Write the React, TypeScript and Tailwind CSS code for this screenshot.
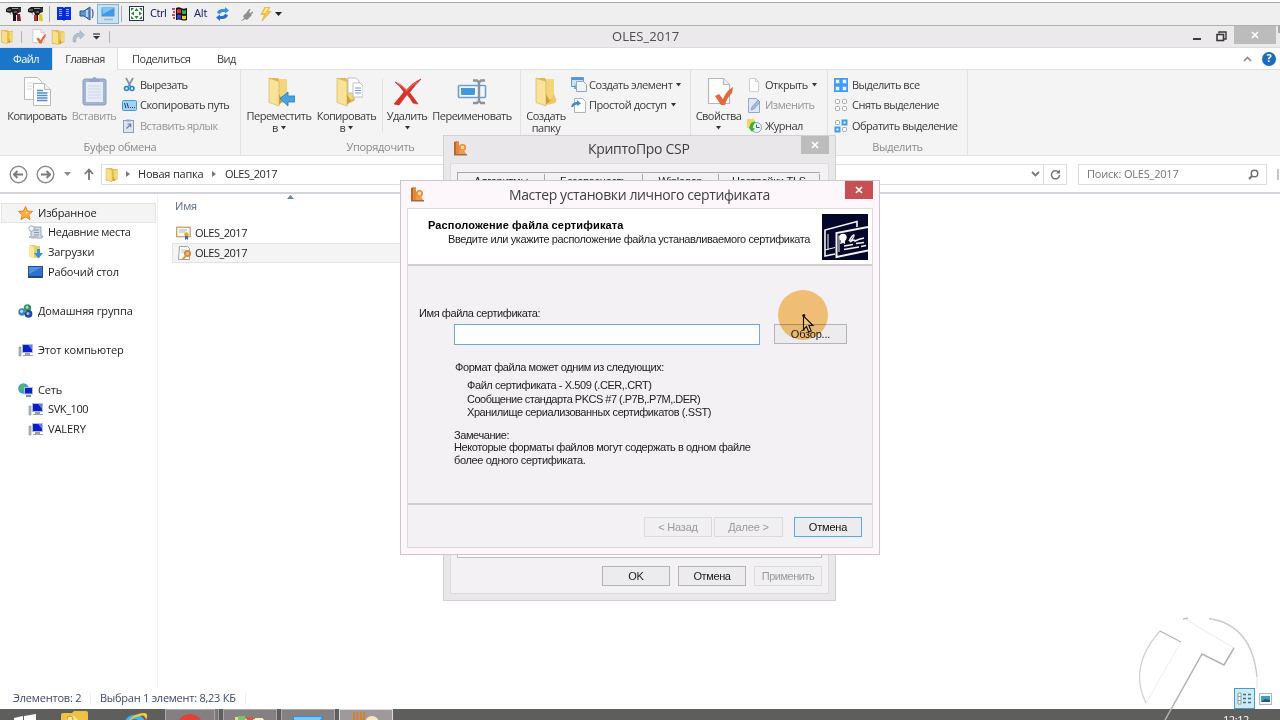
import type { ReactNode } from "react";

type SvgProps = { w: number; h: number; vb?: string; className?: string; children: ReactNode };

function Svg({ w, h, vb, className = "", children }: SvgProps) {
  return (
    <svg width={w} height={h} viewBox={vb ?? `0 0 ${w} ${h}`} fill="none" className={`block shrink-0 ${className}`}>
      {children}
    </svg>
  );
}

/* ---------- icons ---------- */

function Hammer({ yellow = false }: { yellow?: boolean }) {
  return (
    <Svg w={16} h={16}>
      <path d="M0 3l3-2h12v5l-3 1-1 2H7L6 6 4 7 0 6z" fill="#1c1c1c" />
      <path d="M1 4h4M6 2.500h7M8 6h3" stroke="#9a9a9a" />
      <path d="M12 2h3v4h-2z" fill="#3a3a3a" />
      <path d="M7 7h3v8H7z" fill="#15151f" />
      <path d="M11 8h3l1 7h-4z" fill={yellow ? "#e0c820" : "#7d1c30"} />
      {yellow && <path d="M6 9h3v6H6z" fill="#b8322a" />}
      <path d="M4 7l1 2" stroke="#999" />
    </Svg>
  );
}

function Book() {
  return (
    <Svg w={14} h={15}>
      <path d="M0 1h6l1 1 1-1h6v13H8l-1 1-1-1H0z" fill="#0b2fe8" />
      <path d="M2 3.500h3M2 5.500h3M2 7.500h3M2 9.500h3M9 3.500h3M9 5.500h3M9 7.500h3M9 9.500h3" stroke="#8fc0ff" />
      <path d="M7 2v12" stroke="#0b1880" />
    </Svg>
  );
}

function Speaker() {
  return (
    <Svg w={16} h={15}>
      <path d="M1 5h4l6-4v13l-6-4H1z" fill="#5f93cc" stroke="#2e5588" />
      <path d="M8 4v7" stroke="#cfe4f8" strokeWidth="1.500" />
      <path d="M13 3q2 4.500 0 9" stroke="#4a6f9c" strokeWidth="1.300" />
    </Svg>
  );
}

function Screen() {
  return (
    <Svg w={16} h={15}>
      <rect x="1.500" y="1.500" width="13" height="9" rx="1" fill="#3f9ae6" stroke="#9fb4c8" />
      <path d="M2 2h12L3 8z" fill="#7cc3f7" />
      <path d="M4 13.500h9" stroke="#a5b4c2" strokeWidth="1.500" />
    </Svg>
  );
}

function Expand() {
  return (
    <Svg w={15} h={15}>
      <rect x=".5" y=".5" width="14" height="14" fill="#fff" stroke="#2b3050" />
      <path d="M7.500 2l2 3h-4zM7.500 13l2-3h-4zM2 7.500l3-2v4zM13 7.500l-3-2v4z" fill="#168a28" />
      <path d="M2 2h3L2 5zM13 2h-3l3 3zM2 13h3l-3-3zM13 13h-3l3-3z" fill="#1f7a30" />
    </Svg>
  );
}

function WinFlag() {
  return (
    <Svg w={16} h={14}>
      <path d="M4 1q3-1.500 5 0t6 0v12q-3 1-5.500 0T4 13z" fill="#111" />
      <path d="M5 2.500q2-1 4 0v4q-2-1-4 0z" fill="#e0322b" />
      <path d="M10 3q2 .8 4 0v3.800q-2 .8-4 0z" fill="#35b038" />
      <path d="M5 8q2-1 4 0v4q-2-1-4 0z" fill="#2848e0" />
      <path d="M10 8.500q2 .8 4 0v3.500q-2 .8-4 0z" fill="#f0d020" />
      <path d="M0 2h3M1 5h2M0 8h3M1 11h2" stroke="#b02030" strokeWidth="1.500" />
    </Svg>
  );
}

function Sync() {
  return (
    <Svg w={13} h={14}>
      <path d="M1 6q1-4 6-4h2V0l4 3.500-4 3V5H7Q5 5 4 7z" fill="#3a8fe0" />
      <path d="M12 8q-1 4-6 4H4v2L0 10.500l4-3V9h2q2 0 3-2z" fill="#2a6fd0" />
    </Svg>
  );
}

function Plug() {
  return (
    <Svg w={12} h={12}>
      <path d="M0 12l3-3-1-2 5-5 4 4-5 5-2-1-3 2z" fill="#8f8f8f" />
      <path d="M7 3l2-3M9 5l3-2" stroke="#8f8f8f" strokeWidth="1.500" />
    </Svg>
  );
}

function Bolt() {
  return (
    <Svg w={12} h={14}>
      <path d="M5 0h5L7.500 4.500H11L2 14l2.500-6.500H1z" fill="#f5c84a" stroke="#dba53c" strokeWidth=".6" />
      <path d="M6 1h2.500L5 6H3z" fill="#ffeb9a" />
    </Svg>
  );
}

function Caret({ color = "#333", className = "" }: { color?: string; className?: string }) {
  return (
    <Svg w={5} h={4} className={className}>
      <path d="M0 0h5L2.500 3.500z" fill={color} />
    </Svg>
  );
}

function Folder({ w = 14, h = 15 }: { w?: number; h?: number }) {
  return (
    <Svg w={w} h={h} vb="0 0 14 15">
      <path d="M1 1h6l1 1h4.500v10.500L9 14H1z" fill="#e5c154" />
      <path d="M1 1l6 2.200V15l-6-2z" fill="#f7df8c" stroke="#d6b049" strokeWidth=".5" />
      <path d="M9 3h3.500v9H9z" fill="#f2d678" />
      <path d="M8 9l2 4-2 1.500z" fill="#cf9f34" />
    </Svg>
  );
}

function BigFolder({ kind }: { kind: "move" | "copy" | "new" }) {
  return (
    <Svg w={32} h={32}>
      <path d="M6 2h9l1 1.500h8V22q0 3-3 4l-6 2-8-2z" fill="#e0b94c" />
      <path d="M16 4h8v18l-8 3z" fill="#f3d67c" />
      <path d="M6 2l10 3.500V30L6 26.500z" fill="#f9e299" stroke="#d4b050" strokeWidth=".6" />
      <path d="M16 18l4 7-4 4z" fill="#d0a036" />
      {kind === "move" && (
        <path d="M17 22.500l8-6.500v4h7v6h-7v4z" fill="#4aa3df" stroke="#2478b8" strokeWidth=".8" />
      )}
      {kind === "copy" && (
        <g fill="#fff" stroke="#aab2bd" strokeWidth=".8">
          <path d="M17 2h8l3 3v12H17z" />
          <path d="M22 7h7l3 3v11H22z" />
          <path d="M24 12h6M24 14.500h6M24 17h6" stroke="#6f9cd6" strokeWidth="1" />
        </g>
      )}
      {kind === "new" && <path d="M24 18q4 7 1 9l-8 2 4-5z" fill="#ecc968" />}
    </Svg>
  );
}

function CopyBig() {
  return (
    <Svg w={32} h={32}>
      <g fill="#fff" stroke="#b6b9be" strokeWidth="1">
        <path d="M3.500 1.500h13l4 4v18h-17z" />
        <path d="M12.500 7.500h11l6 6v16h-17z" />
        <path d="M23.500 7.500v6h6" fill="#edf1f6" />
      </g>
      <path d="M16 14.500h6M16 17h10.500M16 19.500h10.500M16 22h10.500M16 24.500h10.500" stroke="#4f8bd0" strokeWidth="1.400" />
      <path d="M6 7h6M6 10h5M6 13h5" stroke="#d5dbe2" />
    </Svg>
  );
}

function PasteBig() {
  return (
    <Svg w={32} h={32}>
      <rect x="5" y="3" width="23" height="26" rx="2" fill="#a3b3d0" stroke="#8a9dc0" />
      <rect x="8" y="6" width="17" height="20" fill="#e6edf8" />
      <path d="M11 3h3q2.500-4 5 0h3v3H11z" fill="#94a5c8" />
      <path d="M10 10h13M10 13h13M10 16h13M10 19h13M10 22h13" stroke="#cbd6e8" />
    </Svg>
  );
}

function DeleteBig() {
  return (
    <Svg w={32} h={32}>
      <path d="M4 6Q10 8 15.500 14 21 7 30 3q-6 6-11.500 13.500Q23 22 27 28l-5-1q-2-4-6-8.500Q11 25 8 29l-5-1Q9 21 13 16 9 10 4 6z" fill="#d4342c" stroke="#d4342c" strokeWidth=".8" />
      <path d="M6 7q6 3 9.500 8Q21 9 26 6" stroke="#ea7466" strokeWidth="1" />
    </Svg>
  );
}

function RenameBig() {
  return (
    <Svg w={32} h={32}>
      <rect x="2.500" y="9.500" width="27" height="12" rx="1" fill="#f2f6fa" stroke="#6f9fc8" strokeWidth="1.600" />
      <rect x="5.500" y="12.500" width="13" height="6" fill="#3d9ade" stroke="#2d78b8" strokeWidth=".6" />
      <path d="M17 4.500h4l2 2 2-2h4M17 27h4l2-2 2 2h4M23 5v21" stroke="#8b949e" strokeWidth="2.400" />
    </Svg>
  );
}

function CheckSheet({ w, h }: { w: number; h: number }) {
  return (
    <Svg w={w} h={h} vb="0 0 32 32">
      <path d="M5.500 2.500h15l6 6v19h-21z" fill="#fff" stroke="#b5b8bc" strokeWidth="1.200" />
      <path d="M20.500 2.500v6h6" fill="#eee" stroke="#b5b8bc" strokeWidth="1.200" />
      <path d="M12 20l4-2 4 5Q23 15 30 11l-1 6q-5 5-7 12h-4z" fill="#e4683e" />
    </Svg>
  );
}

function Scissors() {
  return (
    <Svg w={15} h={15}>
      <path d="M4 1l5 9M11 1L6 10" stroke="#7a8ea8" strokeWidth="1.600" />
      <circle cx="4.500" cy="11.500" r="2" fill="#d9eefc" stroke="#2488cc" strokeWidth="1.600" />
      <circle cx="10" cy="11.500" r="2" fill="#d9eefc" stroke="#2488cc" strokeWidth="1.600" />
    </Svg>
  );
}

function PathIcon() {
  return (
    <Svg w={15} h={11}>
      <rect x=".5" y=".5" width="14" height="10" rx="1" fill="#9fd0f6" stroke="#4b9ad8" />
      <path d="M2.500 3l1.500 5M5 3l1.500 5" stroke="#20456a" />
      <path d="M8 7.500h1M10 7.500h1M12 7.500h1" stroke="#20456a" strokeWidth="1.200" />
    </Svg>
  );
}

function ShortcutIcon() {
  return (
    <Svg w={14} h={14}>
      <rect x="1.500" y="1.500" width="10" height="12" fill="#dde4f1" stroke="#8d9dbd" />
      <path d="M4 .5h5v2H4z" fill="#9aaac8" />
      <path d="M4.500 9.500l4-4M5.500 5h3.200v3.200" stroke="#6b7fa8" strokeWidth="1.200" />
    </Svg>
  );
}

function NewItemIcon() {
  return (
    <Svg w={16} h={15}>
      <path d="M.5.5h12v9H.5z" fill="#cfe3f5" stroke="#5b9cd0" />
      <path d="M1 1h11v2H1z" fill="#4d98d8" />
      <path d="M5.500 4.500h7l3 3v7h-10z" fill="#eef3f8" stroke="#93a7bb" />
      <path d="M3 12l1-6 1 6z" fill="#5b9cd0" />
    </Svg>
  );
}

function EasyAccessIcon() {
  return (
    <Svg w={15} h={15}>
      <path d="M3.500.5h8l3 3v11h-11z" fill="#fff" stroke="#aab4be" />
      <path d="M0 9q1-5 6-5V2l4 3.500L6 8V6.500Q3 6.500 2 9z" fill="#3f8fd0" />
    </Svg>
  );
}

function BlankSheet() {
  return (
    <Svg w={14} h={14}>
      <path d="M2.500.5h6l3 3v10h-9z" fill="#fff" stroke="#cfcfcf" />
      <path d="M8.500.5v3h3" stroke="#cfcfcf" />
    </Svg>
  );
}

function EditSheet() {
  return (
    <Svg w={14} h={15}>
      <path d="M1.500.5h8l3 3v11h-11z" fill="#dfe8f6" stroke="#8fa8d0" />
      <path d="M4 12l1-3 6-7 2 2-6 7z" fill="#a7bbdf" stroke="#7690c2" strokeWidth=".7" />
    </Svg>
  );
}

function HistoryIcon() {
  return (
    <Svg w={15} h={14}>
      <path d="M0 0h7l1 2v7H0z" fill="#f3d566" />
      <circle cx="9.500" cy="8.500" r="5" fill="#eaf3f8" stroke="#8aa0b4" />
      <path d="M9.500 5.500v3h3" stroke="#3c5a7c" />
      <path d="M2 9l2-5q3-2 5-1-3 2-3 6l2 .500L5 13z" fill="#35b52e" />
    </Svg>
  );
}

function SelectIcon({ kind }: { kind: "all" | "none" | "invert" }) {
  const cells = [
    [1, 1],
    [8, 1],
    [1, 8],
    [8, 8],
  ];
  return (
    <Svg w={14} h={14}>
      {kind === "all" && <rect width="14" height="14" fill="#3f9cf0" />}
      {cells.map(([x, y], i) => {
        const on = kind === "all" || (kind === "invert" && (i === 1 || i === 2));
        return on ? (
          <rect key={i} x={x + 0.5} y={y + 0.5} width="4" height="4" fill="#e8f4ff" stroke="#3f9cf0" strokeWidth={kind === "all" ? 0.5 : 2} />
        ) : (
          <rect key={i} x={x + 0.5} y={y + 0.5} width="4" height="4" rx="1" fill="#fff" stroke="#a4a4a4" />
        );
      })}
    </Svg>
  );
}

function NavCircle({ flip = false }: { flip?: boolean }) {
  return (
    <Svg w={19} h={19} className={flip ? "-scale-x-100" : ""}>
      <circle cx="9.500" cy="9.500" r="8.300" stroke="#8a8a8a" strokeWidth="1.400" />
      <path d="M5 9.500h9M8.500 6L5 9.500 8.500 13" stroke="#7a7a7a" strokeWidth="2" />
    </Svg>
  );
}

function Computer() {
  return (
    <Svg w={16} h={14}>
      <path d="M1 4h2v9H1z" fill="#b4babf" stroke="#858d94" strokeWidth=".6" />
      <rect x="4" y="1" width="11" height="9" fill="#b4bdcb" />
      <rect x="5" y="2" width="9" height="7" fill="#0a1ecb" />
      <path d="M10 2h4v5z" fill="#5c7cf0" />
      <path d="M7 10h5v2H7zM5 12h10v1H5z" fill="#9aa2ac" />
    </Svg>
  );
}

function Star() {
  return (
    <Svg w={15} h={14}>
      <path d="M7.500.5l2 4.500 5 .5-3.800 3.300L12 13.500l-4.500-2.600L3 13.500l1.300-4.700L.5 5.500l5-.5z" fill="#fbb040" stroke="#e8812a" />
      <path d="M7.500 3l1 3h2.500L8 8z" fill="#ffe08a" />
    </Svg>
  );
}

function Recent() {
  return (
    <Svg w={15} h={14}>
      <path d="M3 2h10v9h2q0 2-2 2H3z" fill="#d3dce4" stroke="#8b98a5" strokeWidth=".8" />
      <path d="M6 5h5M6 7.500h5M6 10h5" stroke="#7f98b4" />
      <circle cx="3.500" cy="3.500" r="2.700" fill="#f2f5f7" stroke="#8f9ba6" strokeWidth=".8" />
      <path d="M1 11h9v2H1z" fill="#b5c0ca" />
    </Svg>
  );
}

function Downloads() {
  return (
    <Svg w={15} h={15}>
      <path d="M1 1h6l1 1h4v11l-5 1-6-1.500z" fill="#eccb62" />
      <path d="M1 1l5 2v11.500l-5-1.500z" fill="#fbe7a0" />
      <path d="M9 5h3v4h3l-4.500 5.500L6 9h3z" fill="#2f93d8" />
    </Svg>
  );
}

function Desktop() {
  return (
    <Svg w={15} h={12}>
      <rect x=".5" y=".5" width="14" height="11" fill="#2f6fd0" stroke="#24508f" />
      <path d="M1 1h13L1 8z" fill="#4e92e6" />
      <path d="M1 10.500h13" stroke="#1c3f78" />
    </Svg>
  );
}

function HomeGroup() {
  return (
    <Svg w={15} h={14}>
      <circle cx="9.500" cy="4" r="3.700" fill="#2f8f66" />
      <circle cx="4" cy="8" r="3.700" fill="#3d7fd0" />
      <circle cx="10.500" cy="9.800" r="3.900" fill="#2448a8" />
      <circle cx="9" cy="3.300" r="1.500" fill="#a9dca8" />
      <circle cx="3.600" cy="7.200" r="1.500" fill="#bfe0f8" />
      <circle cx="10" cy="9.500" r="1.500" fill="#9fc4f0" />
      <circle cx="7" cy="7" r="1.500" fill="#35b04a" />
    </Svg>
  );
}

function Network() {
  return (
    <Svg w={15} h={14}>
      <circle cx="5.500" cy="5.500" r="5.300" fill="#3f9fd8" />
      <path d="M2 3q3-3 5 0t-2 4-3-4z" fill="#4cc054" />
      <rect x="6" y="4" width="9" height="7.500" fill="#b4bdcb" />
      <rect x="7" y="5" width="7" height="5.500" fill="#0a1ecb" />
      <path d="M8 12h5v2H8z" fill="#6f8fc0" />
    </Svg>
  );
}

function CertFile() {
  return (
    <Svg w={15} h={14}>
      <rect x=".7" y="1.200" width="13.500" height="9.500" fill="#fbfaf4" stroke="#c29a5c" strokeWidth="1.200" />
      <path d="M3 4h8M3 6h6" stroke="#aab4c0" />
      <circle cx="10.500" cy="8.500" r="2.200" fill="#e5a33a" />
      <path d="M9 10h3v4l-1.500-1L9 14z" fill="#3a6fc0" />
    </Svg>
  );
}

function KeyFile() {
  return (
    <Svg w={15} h={15}>
      <path d="M2.500.5h8l2 2v11h-11z" fill="#fafafa" stroke="#a2a2a2" />
      <path d="M4 4h5M4 6h4" stroke="#c4c4c4" />
      <circle cx="10.500" cy="7.500" r="2.600" fill="#e8b878" stroke="#d08a35" strokeWidth="1.800" />
      <path d="M8.500 9L4 13.500h3l3-3.500z" fill="#dc9a48" />
    </Svg>
  );
}

function CryptoIcon() {
  return (
    <Svg w={15} h={15}>
      <path d="M1 1l3-1v14H1z" fill="#c2622a" />
      <path d="M3 1l3-1v14H3z" fill="#e2893a" />
      <path d="M6 5h2v8H6z" fill="#f0a050" />
      <circle cx="9.500" cy="6.500" r="2.700" fill="#fbd9a8" stroke="#ee8a34" strokeWidth="1.600" />
      <path d="M8 9l-2 4h7l-2-4z" fill="#f29a4c" />
      <path d="M1 13h13v1.500H1z" fill="#a86848" />
    </Svg>
  );
}

function WizardCert() {
  return (
    <Svg w={46} h={46}>
      <rect width="46" height="46" fill="#04062a" />
      <g stroke="#f4f4fa" strokeWidth="1.600">
        <path d="M13 40L3 42V16l32-8.500V13" />
        <path d="M3 36l10-2.500M6 20v16" strokeWidth="1" />
        <path d="M46 13l-31.500 6V43L46 36.500" strokeWidth="2" />
        <path d="M17 21.500V38" strokeWidth="1" />
        <path d="M27 27q4-7 5-6t-4 7q3-2 4-2t1 1q4-2 9-3" strokeWidth="1.400" />
        <path d="M22 32l9-1.500M34 29.500l8-1M22 35.500l15-2.500M39 32.500l5-1" strokeWidth="1.500" />
      </g>
      <circle cx="21" cy="23.500" r="3.700" fill="#fff" />
      <path d="M19 26l-1 4 3-1 2 1v-4z" fill="#fff" />
    </Svg>
  );
}

/* ---------- ribbon ---------- */

function BigButton({ icon, label, second, arrow, muted, className }: {
  icon: ReactNode;
  label: string;
  second?: string;
  arrow?: boolean;
  muted?: boolean;
  className: string;
}) {
  return (
    <div className={`flex shrink-0 flex-col items-center whitespace-nowrap pt-[6px] ${muted ? "text-[#959595]" : "text-[#3a3a3a]"} ${className}`}>
      {icon}
      <span className="mt-[2px] leading-3">{label}</span>
      <span className="flex h-3 items-center gap-[3px] leading-3">
        {second}
        {arrow && <Caret />}
      </span>
    </div>
  );
}

function SmallButton({ icon, label, arrow, muted }: { icon: ReactNode; label: string; arrow?: boolean; muted?: boolean }) {
  return (
    <div className={`flex h-[20.5px] items-center whitespace-nowrap ${muted ? "text-[#959595]" : "text-[#3a3a3a]"}`}>
      <span className="flex w-[18px] shrink-0 items-center">{icon}</span>
      {label}
      {arrow && <Caret className="ml-1" />}
    </div>
  );
}

function Group({ label, className, children }: { label?: string; className: string; children: ReactNode }) {
  return (
    <div className={`flex h-[85px] shrink-0 flex-col border-r border-[#e2e2e2] ${className}`}>
      <div className="flex h-[70px]">{children}</div>
      <span className="text-center leading-[14px] tracking-[-0.3px] text-[#8a8a8a]">{label}</span>
    </div>
  );
}

function Ribbon() {
  return (
    <div className="flex h-[86px] shrink-0 border-b border-[#e2e2e4] bg-[#f4f4f4] text-[11px] tracking-[-0.5px]">
      <Group label="Буфер обмена" className="w-[241px]">
        <BigButton className="w-[74px]" icon={<CopyBig />} label="Копировать" />
        <BigButton className="w-[40px]" icon={<PasteBig />} label="Вставить" muted />
        <div className="ml-[8px] flex flex-col pt-[4.5px]">
          <SmallButton icon={<Scissors />} label="Вырезать" />
          <SmallButton icon={<PathIcon />} label="Скопировать путь" />
          <SmallButton icon={<ShortcutIcon />} label="Вставить ярлык" muted />
        </div>
      </Group>
      <Group label="Упорядочить" className="w-[280px]">
        <BigButton className="w-[76px]" icon={<BigFolder kind="move" />} label="Переместить" second="в" arrow />
        <BigButton className="w-[59px]" icon={<BigFolder kind="copy" />} label="Копировать" second="в" arrow />
        <div className="ml-[6px] mt-2 h-[54px] w-px shrink-0 bg-[#e2e2e2]" />
        <BigButton className="w-[48px]" icon={<DeleteBig />} label="Удалить" arrow />
        <BigButton className="w-[82px]" icon={<RenameBig />} label="Переименовать" />
      </Group>
      <Group className="w-[170px]">
        <BigButton className="w-[50px]" icon={<BigFolder kind="new" />} label="Создать" second="папку" />
        <div className="flex flex-col pt-[4.5px] tracking-[-0.45px]">
          <SmallButton icon={<NewItemIcon />} label="Создать элемент" arrow />
          <SmallButton icon={<EasyAccessIcon />} label="Простой доступ" arrow />
        </div>
      </Group>
      <Group className="w-[137px]">
        <BigButton className="w-[55px]" icon={<CheckSheet w={32} h={32} />} label="Свойства" arrow />
        <div className="ml-[1px] flex flex-col pt-[4.5px]">
          <SmallButton icon={<BlankSheet />} label="Открыть" arrow />
          <SmallButton icon={<EditSheet />} label="Изменить" muted />
          <SmallButton icon={<HistoryIcon />} label="Журнал" />
        </div>
      </Group>
      <Group label="Выделить" className="w-[140px]">
        <div className="ml-[6px] flex flex-col pt-[4.5px]">
          <SmallButton icon={<SelectIcon kind="all" />} label="Выделить все" />
          <SmallButton icon={<SelectIcon kind="none" />} label="Снять выделение" />
          <SmallButton icon={<SelectIcon kind="invert" />} label="Обратить выделение" />
        </div>
      </Group>
    </div>
  );
}

/* ---------- window bars ---------- */

function RemoteBar() {
  return (
    <div className="flex h-[26px] shrink-0 items-center border-b border-[#b0b0b0] bg-[#efefef] pt-[2px] font-['Noto_Sans',sans-serif] text-[11px] text-[#22227a] shadow-[inset_0_2px_0_#fff,inset_0_3px_0_#a8a8a8]">
      <div className="flex w-[49px] items-center gap-[6px] pl-[6px]">
        <Hammer />
        <Hammer yellow />
      </div>
      <div className="h-4 w-px bg-[#aaa]" />
      <div className="ml-[7px] w-[22px]"><Book /></div>
      <div className="w-[18px]"><Speaker /></div>
      <div className="flex h-[20px] w-[22px] items-center justify-center border border-[#7db4d8] bg-[#c9e2f2]"><Screen /></div>
      <div className="ml-[2px] h-4 w-px bg-[#aaa]" />
      <div className="ml-[7px] w-[21px]"><Expand /></div>
      <div className="w-[22px] tracking-[-0.5px]">Ctrl</div>
      <div className="w-[22px]"><WinFlag /></div>
      <div className="w-[22px] tracking-[-0.2px]">Alt</div>
      <div className="w-[25px]"><Sync /></div>
      <div className="w-[19px] pt-[3px]"><Plug /></div>
      <div className="w-[15px]"><Bolt /></div>
      <Svg w={7} h={4}><path d="M0 0h7L3.500 4z" fill="#222" /></Svg>
    </div>
  );
}

function TitleBar() {
  return (
    <div className="flex h-[22px] shrink-0 items-center border-b border-[#dcdcdc] bg-[#ebe9ec]">
      <div className="w-[21px]"><Folder w={15} h={15} /></div>
      <div className="h-3 w-px bg-[#b4b4b4]" />
      <div className="ml-[8px] w-[21px]"><CheckSheet w={17} h={17} /></div>
      <div className="w-[20px]"><Folder w={15} h={16} /></div>
      <div className="w-[22px]">
        <Svg w={14} h={14}>
          <path d="M2 12Q1 3 9 3V.5L13.500 5 9 9V6.500Q4 6 5 12z" fill="#b3bfd2" stroke="#96a5bf" strokeWidth=".5" />
        </Svg>
      </div>
      <Svg w={7} h={7}>
        <path d="M0 1h7" stroke="#333" strokeWidth="1.200" />
        <path d="M0 3h7L3.500 6.500z" fill="#333" />
      </Svg>
      <div className="ml-[9px] h-3 w-px bg-[#b4b4b4]" />
      <div className="ml-[502px] w-[559px] text-[13px] leading-none tracking-[0.05px] text-[#4c4c4c]">OLES_2017</div>
      <div className="flex flex-1 items-center">
        <div className="mt-1 ml-[22px] h-[2px] w-2 bg-[#3a3a3a]" />
        <Svg w={11} h={11} className="ml-[15px]">
          <path d="M3 2.500V1h7v7H8" stroke="#3a3a3a" strokeWidth="1.400" />
          <rect x="1" y="3.500" width="6.500" height="6" stroke="#3a3a3a" strokeWidth="1.600" />
        </Svg>
      </div>
      <div className="flex h-[18px] w-[42px] items-center justify-center self-start bg-[#bcbcbc]">
        <Svg w={8} h={8}><path d="M1 1l6 6M7 1L1 7" stroke="#fff" strokeWidth="1.600" /></Svg>
      </div>
      <div className="ml-[2px] h-[7px] w-[2px] self-start bg-[#aaa]" />
    </div>
  );
}

function TabRow() {
  return (
    <div className="flex h-[22px] shrink-0 items-center whitespace-nowrap border-b border-[#e0e0e2] bg-white text-[11px] text-[#3c3c3c]">
      <div className="flex h-[22px] w-[52px] items-center justify-center bg-[#1b75c9] pt-px tracking-[-0.5px] text-white">Файл</div>
      <div className="-mb-px flex h-[22px] w-[66px] items-center justify-center border-x border-[#e0e0e0] bg-[#f7f7f7] pt-px tracking-[-0.6px]">Главная</div>
      <div className="ml-[14px] w-[85px] pt-px tracking-[-0.5px]">Поделиться</div>
      <div className="flex-1 pt-px tracking-[-0.5px]">Вид</div>
      <Svg w={9} h={6} className="mr-[10px]"><path d="M1 5l3.500-3.500L8 5" stroke="#8c8c8c" strokeWidth="1.700" /></Svg>
      <div className="mr-[4px] flex h-[14px] w-[14px] items-center justify-center rounded-full bg-[#1c6cbc] text-[11px] font-bold text-white">?</div>
    </div>
  );
}

function AddressRow() {
  return (
    <div className="flex h-[38px] shrink-0 items-center whitespace-nowrap border-b-2 border-[#d3d3d9] bg-white text-[11px] text-[#2a2a2a]">
      <div className="ml-[9px] w-[27px]"><NavCircle /></div>
      <div className="w-[28px]"><NavCircle flip /></div>
      <div className="w-[20px]"><Svg w={7} h={4}><path d="M0 0h7L3.500 4z" fill="#888" /></Svg></div>
      <Svg w={10} h={12}><path d="M5 12V2M1 6l4-4.500L9 6" stroke="#777" strokeWidth="1.800" /></Svg>
      <div className="ml-[7px] flex h-[21px] w-[966px] items-center border border-[#dedede]">
        <div className="ml-[3px] w-[21px]"><Folder w={14} h={15} /></div>
        <Svg w={4} h={6}><path d="M0 0l4 3-4 3z" fill="#777" /></Svg>
        <span className="ml-[8px] w-[74px] tracking-[-0.2px]">Новая папка</span>
        <Svg w={4} h={6}><path d="M0 0l4 3-4 3z" fill="#777" /></Svg>
        <span className="ml-[9px] flex-1 tracking-[-0.5px]">OLES_2017</span>
        <Svg w={9} h={6} className="mr-[3px]"><path d="M1 1l3.500 3.500L8 1" stroke="#777" strokeWidth="1.800" /></Svg>
        <div className="flex h-[19px] w-[23px] items-center justify-center border-l border-[#dedede]">
          <Svg w={11} h={11}>
            <path d="M8.500 3.200A4 4 0 1 0 9.500 6" stroke="#777" strokeWidth="1.500" />
            <path d="M6 4.500h4v-4z" fill="#777" />
          </Svg>
        </div>
      </div>
      <div className="ml-[11px] flex h-[21px] w-[189px] items-center border border-[#dedede] pl-[8px] text-[#747474]">
        <span className="flex-1 tracking-[-0.2px]">Поиск: OLES_2017</span>
        <Svg w={11} h={11} className="mr-[7px]">
          <circle cx="6.500" cy="4.500" r="3.300" stroke="#707070" strokeWidth="1.500" />
          <path d="M4 7L1 10" stroke="#707070" strokeWidth="2" />
        </Svg>
      </div>
      <div className="ml-[10px] h-[11px] w-[2px] bg-[#c8c4c0]" />
    </div>
  );
}

/* ---------- body ---------- */

function NavItem({ icon, label, className = "" }: { icon: ReactNode; label: string; className?: string }) {
  return (
    <div className={`flex h-[19.6px] shrink-0 items-center whitespace-nowrap ${className}`}>
      <span className="flex w-[20px] shrink-0 items-center">{icon}</span>
      {label}
    </div>
  );
}

function Body() {
  return (
    <div className="flex h-[494px] shrink-0 bg-white text-[11px] text-[#1c1c1c]">
      <div className="flex w-[158px] shrink-0 flex-col border-r border-[#f0f0f0] pt-[9px] tracking-[-0.15px]">
        <NavItem className="mx-px border border-[#e4e4e4] bg-[#f4f4f4] pl-[16px]" icon={<Star />} label="Избранное" />
        <NavItem className="pl-[28px] tracking-[-0.3px]" icon={<Recent />} label="Недавние места" />
        <NavItem className="pl-[28px]" icon={<Downloads />} label="Загрузки" />
        <NavItem className="pl-[28px] pt-px" icon={<Desktop />} label="Рабочий стол" />
        <NavItem className="mt-[19.7px] pl-[18px]" icon={<HomeGroup />} label="Домашняя группа" />
        <NavItem className="mt-[19.8px] pl-[18px]" icon={<Computer />} label="Этот компьютер" />
        <NavItem className="mt-[19.8px] pl-[18px] pt-px" icon={<Network />} label="Сеть" />
        <NavItem className="pl-[28px] tracking-[-0.4px]" icon={<Computer />} label="SVK_100" />
        <NavItem className="pl-[28px] tracking-[-0.1px]" icon={<Computer />} label="VALERY" />
      </div>
      <div className="flex w-[640px] flex-col pl-[14px]">
        <div className="flex h-[29px] items-start justify-start pl-[3px] tracking-[-0.2px] text-[#5b6a8c]">
          <span className="mt-[4px] w-[112px] leading-4">Имя</span>
          <Svg w={7} h={4} className="mt-[1px]"><path d="M0 4l3.500-4L7 4z" fill="#5f88a6" /></Svg>
        </div>
        <div className="flex h-[20px] items-center pl-[4px] tracking-[-0.5px]">
          <span className="w-[19px]"><CertFile /></span>
          OLES_2017
        </div>
        <div className="flex h-[20px] items-center border border-[#e4e4e4] bg-[#f4f4f4] pl-[4px] tracking-[-0.5px]">
          <span className="w-[18px]"><KeyFile /></span>
          OLES_2017
        </div>
      </div>
    </div>
  );
}

function StatusBar() {
  return (
    <div className="flex h-[21px] shrink-0 items-center whitespace-nowrap bg-white pl-[13px] text-[11px] text-[#3c4866]">
      <span className="w-[77px] tracking-[-0.2px]">Элементов: 2</span>
      <span className="h-3 w-px bg-[#eee]" />
      <span className="ml-[9px] w-[145px] tracking-[-0.25px]">Выбран 1 элемент: 8,23 КБ</span>
      <span className="h-3 w-px bg-[#eee]" />
      <div className="ml-auto flex h-[21px] w-[21px] items-center justify-center border border-[#3f9fc4] bg-[#cdeaf6]">
        <Svg w={15} h={13}>
          <path d="M1 1h3v11H1zM1 4.500h3M1 8.500h3" stroke="#8b9aa6" fill="#fff" />
          <path d="M6 2.500h3M6 6.500h3M6 10.500h3M11 2.500h3M11 6.500h3M11 10.500h3" stroke="#4a6a80" strokeWidth="1.300" />
        </Svg>
      </div>
      <Svg w={13} h={12} className="ml-[4px] mr-[8px]">
        <rect x=".5" y=".5" width="12" height="11" fill="#f5f8fa" stroke="#a9bac6" />
        <rect x="2" y="3" width="9" height="6" fill="#3f9cc8" />
        <path d="M2 9l4-3 5 1v2z" fill="#2d5a62" />
      </Svg>
    </div>
  );
}

function TaskButton({ className, children }: { className: string; children: ReactNode }) {
  return (
    <div className={`flex h-[20px] shrink-0 justify-center border pt-[2px] ${className}`}>{children}</div>
  );
}

function TaskBar() {
  return (
    <div className="flex h-[11px] shrink-0 items-start overflow-hidden bg-[#5e5e5d]">
      <Svg w={24} h={24} className="ml-[14px] mt-[5px]">
        <path d="M0 4l9-2v9H0zM10 2l12-2v11H10z" fill="#fff" />
      </Svg>
      <Svg w={28} h={24} className="ml-[23px] mt-[2px]">
        <path d="M0 4q0-2 2-2h9l2-2h12q2 0 2 2v20H0z" fill="#f0c244" />
        <path d="M5 8q3-4 8-3l5 5v8H5z" fill="#f9e79a" />
        <circle cx="9" cy="8" r="3" stroke="#c99a20" />
      </Svg>
      <Svg w={28} h={26} className="ml-[34px] mt-[3px]">
        <circle cx="12" cy="14" r="9" stroke="#45b2ea" strokeWidth="4.500" />
        <path d="M2 12Q12 0 22 1q4 1 1 7-1-6-6-4Q8 6 2 12z" fill="#f5c93a" />
      </Svg>
      <TaskButton className="ml-[14px] w-[50px] border-[#a9a9a9] bg-[#857f82]">
        <Svg w={26} h={26} className="mt-[2px]"><circle cx="13" cy="13" r="13" fill="#e0413a" /></Svg>
      </TaskButton>
      <div className="h-[12px] w-[4px] border-r border-[#a0a0a0] bg-[#7b7779]" />
      <TaskButton className="ml-[4px] w-[54px] border-[#a9a9a9] bg-[#858082]">
        <Svg w={30} h={20} className="mt-[4px]">
          <path d="M0 1h9l2 2h18v17H0z" fill="#ecd48a" />
          <path d="M3 0h7v4H3z" fill="#7dc06a" /><path d="M12 1h6v4h-6z" fill="#d4573e" /><path d="M20 2h8v4h-8z" fill="#f8efca" />
        </Svg>
      </TaskButton>
      <TaskButton className="ml-[4px] w-[54px] border-[#a9a9a9] bg-[#858082]">
        <Svg w={30} h={20} className="mt-[4px]"><path d="M0 1q0-1 1-1h28l1 1v19H0z" fill="#2d8fdc" /><path d="M1 1h28l-2 3H1z" fill="#7cc4f4" /></Svg>
      </TaskButton>
      <TaskButton className="ml-[4px] w-[54px] border-[#dedadc] bg-[#9f999c]">
        <Svg w={28} h={20}>
          <path d="M2 0v6q0 3 3 3h4q3 0 3-3V0M5.500 0v14M9 0v14" stroke="#cf8430" strokeWidth="2" />
          <circle cx="20" cy="11" r="7" fill="#f7e7bd" />
          <path d="M8 9h8v8H8z" fill="#d99a4c" />
        </Svg>
      </TaskButton>
      <span className="ml-auto mr-[31px] mt-[3px] text-[11px] leading-[15px] tracking-[-0.4px] text-white">12:12</span>
    </div>
  );
}

/* ---------- dialogs ---------- */

function Btn({ label, className, tone = "normal" }: { label: string; className: string; tone?: "normal" | "off" | "focus" }) {
  const look =
    tone === "off"
      ? "border-[#dcdadd] bg-[#f0eff1] text-[#9a9a9c]"
      : tone === "focus"
        ? "border-[#59a9e4] bg-[#ececee] text-[#111]"
        : "border-[#b4b4b6] bg-[#ececee] text-[#222]";
  return (
    <div className={`flex shrink-0 items-center justify-center whitespace-nowrap border ${look} ${className}`}>{label}</div>
  );
}

function CspTab({ label, className }: { label: string; className: string }) {
  return <div className={`shrink-0 border-r border-[#a9a9ab] text-center leading-[14px] ${className}`}>{label}</div>;
}

function CspDialog() {
  return (
    <div className="absolute left-[443px] top-[135px] flex h-[466px] w-[393px] flex-col border border-[#d2d0d3] bg-[#e9e7ea] px-[6px] pb-[6px] font-['Liberation_Sans',Arial,sans-serif] text-[11px] tracking-[-0.25px]">
      <div className="flex h-[27px] shrink-0 items-center pb-[2px]">
        <div className="ml-[3px] w-[135px]"><CryptoIcon /></div>
        <div className="flex-1 font-['Open_Sans',sans-serif] text-[14px] leading-none tracking-[-0.3px] text-[#404040]">КриптоПро CSP</div>
        <div className="flex h-[18px] w-[28px] items-center justify-center self-start bg-[#bcbcbc]">
          <Svg w={8} h={8}><path d="M1 1l6 6M7 1L1 7" stroke="#fff" strokeWidth="1.700" /></Svg>
        </div>
      </div>
      <div className="flex flex-1 flex-col border border-[#dddbde] bg-[#f3f1f4] px-[6px] pt-[8px]">
        <div className="flex h-4 w-[363px] border-l border-t border-[#a9a9ab] pt-px text-[#222]">
          <CspTab className="w-[87px]" label="Алгоритмы" />
          <CspTab className="w-[98px]" label="Безопасность" />
          <CspTab className="w-[76px]" label="Winlogon" />
          <CspTab className="w-[101px]" label="Настройки TLS" />
        </div>
        <div className="h-[370px] w-[365px] shrink-0 border border-[#bdbbbe] bg-white" />
        <div className="mt-[8px] flex gap-[8px] pl-[145px]">
          <Btn className="h-[20px] w-[68px]" label="OK" />
          <Btn className="h-[20px] w-[68px] tracking-[-0.4px]" label="Отмена" />
          <Btn className="h-[20px] w-[68px] tracking-[-0.5px]" label="Применить" tone="off" />
        </div>
      </div>
    </div>
  );
}

function Wizard() {
  return (
    <div className="absolute left-[400px] top-[180px] flex h-[375px] w-[480px] flex-col border border-[#cbc8cc] bg-[#fdf7fc] px-[6px] pb-[6px] font-['Liberation_Sans',Arial,sans-serif] text-[11px] tracking-[-0.42px] text-[#1c1c1c]">
      <div className="flex h-[27px] shrink-0 items-center">
        <div className="ml-[3px] w-[99px]"><CryptoIcon /></div>
        <div className="flex-1 whitespace-nowrap font-['Open_Sans',sans-serif] text-[14px] leading-none tracking-[-0.38px] text-[#404040]">Мастер установки личного сертификата</div>
        <div className="flex h-[18px] w-[28px] items-center justify-center self-start bg-[#c75055]">
          <Svg w={8} h={8}><path d="M1 1l6 6M7 1L1 7" stroke="#fff" strokeWidth="1.700" /></Svg>
        </div>
      </div>
      <div className="flex flex-1 flex-col border border-[#dedbdf] bg-[#f3f1f4]">
        <div className="flex h-[57px] shrink-0 border-b-2 border-[#cfcdd0] bg-white">
          <div className="flex w-[414px] shrink-0 flex-col whitespace-nowrap pt-[9px] pl-[20px]">
            <span className="font-bold leading-[14px] tracking-[0.14px] text-black">Расположение файла сертификата</span>
            <span className="pl-[20px] leading-[14px] tracking-[-0.39px]">Введите или укажите расположение файла устанавливаемого сертификата</span>
          </div>
          <div className="mt-[5px]"><WizardCert /></div>
        </div>
        <div className="flex flex-1 flex-col whitespace-nowrap pl-[11px]">
          <span className="mt-[39px] leading-4">Имя файла сертификата:</span>
          <div className="mt-[3px] ml-[35px] flex gap-[14px]">
            <div className="h-[21px] w-[306px] border border-[#6ba8dc] bg-white" />
            <Btn className="h-[20px] w-[73px] tracking-[-0.2px]" label="Обзор..." />
          </div>
          <span className="mt-[14px] ml-[36px] leading-4">Формат файла может одним из следующих:</span>
          <div className="mt-[4px] ml-[48px] flex flex-col leading-[13.500px]">
            <span>Файл сертификата - X.509 (.CER,.CRT)</span>
            <span className="tracking-[-0.51px]">Сообщение стандарта PKCS #7 (.P7B,.P7M,.DER)</span>
            <span>Хранилище сериализованных сертификатов (.SST)</span>
          </div>
          <div className="mt-[9.300px] ml-[35px] flex flex-col leading-[12.400px]">
            <span>Замечание:</span>
            <span>Некоторые форматы файлов могут содержать в одном файле</span>
            <span className="tracking-[-0.35px]">более одного сертификата.</span>
          </div>
        </div>
        <div className="flex h-[44px] shrink-0 justify-end border-t-2 border-[#cfcdd0] pt-[12px] pr-[10px] tracking-[-0.2px]">
          <Btn className="h-[20px] w-[68px]" label="< Назад" tone="off" />
          <Btn className="ml-[2px] h-[20px] w-[69px]" label="Далее >" tone="off" />
          <Btn className="ml-[11px] h-[20px] w-[68px]" label="Отмена" tone="focus" />
        </div>
      </div>
    </div>
  );
}

function Pointer() {
  return (
    <div className="absolute left-[778px] top-[290px] h-[50px] w-[50px] mix-blend-multiply">
      <div className="h-[50px] w-[50px] rounded-full bg-[#fbc878]" />
      <div className="absolute left-[24px] top-[24px]">
        <Svg w={14} h={20}>
          <path d="M1.500 2v13.500l3-3 2.200 5.500 2.500-1-2.300-5.500H11z" fill="#fbd08a" stroke="#111" strokeWidth="1.100" />
          <circle cx="1.800" cy="1.500" r="1.500" fill="#111" />
        </Svg>
      </div>
    </div>
  );
}

function Watermark() {
  return (
    <div className="absolute left-[1134px] top-[612px]">
      <Svg w={130} h={108}>
        <path d="M12 91Q-6 55 26 19" stroke="#cfcfcf" strokeWidth="1.200" />
        <path d="M26 19l21 11" stroke="#b4b4b4" strokeWidth="1.400" />
        <path d="M47 30L12 91" stroke="#eeeeee" />
        <path d="M51 7l49 29" stroke="#eaeaea" />
        <path d="M75 6.500Q118 13 123 65" stroke="#cacaca" strokeWidth="1.400" />
        <path d="M100 36l-10 17-22-11-37 66" stroke="#b2b2b2" strokeWidth="1.500" />
        <path d="M123 65v12" stroke="#e4e4e4" />
        <path d="M49 7l5-1" stroke="#c0c0c0" strokeWidth="1.500" />
      </Svg>
    </div>
  );
}

export default function App() {
  return (
    <div className="relative flex h-[720px] w-[1280px] flex-col overflow-hidden bg-white font-['Open_Sans','Noto_Sans',sans-serif]">
      <RemoteBar />
      <TitleBar />
      <TabRow />
      <Ribbon />
      <AddressRow />
      <Body />
      <StatusBar />
      <TaskBar />
      <CspDialog />
      <Wizard />
      <Pointer />
      <Watermark />
    </div>
  );
}
